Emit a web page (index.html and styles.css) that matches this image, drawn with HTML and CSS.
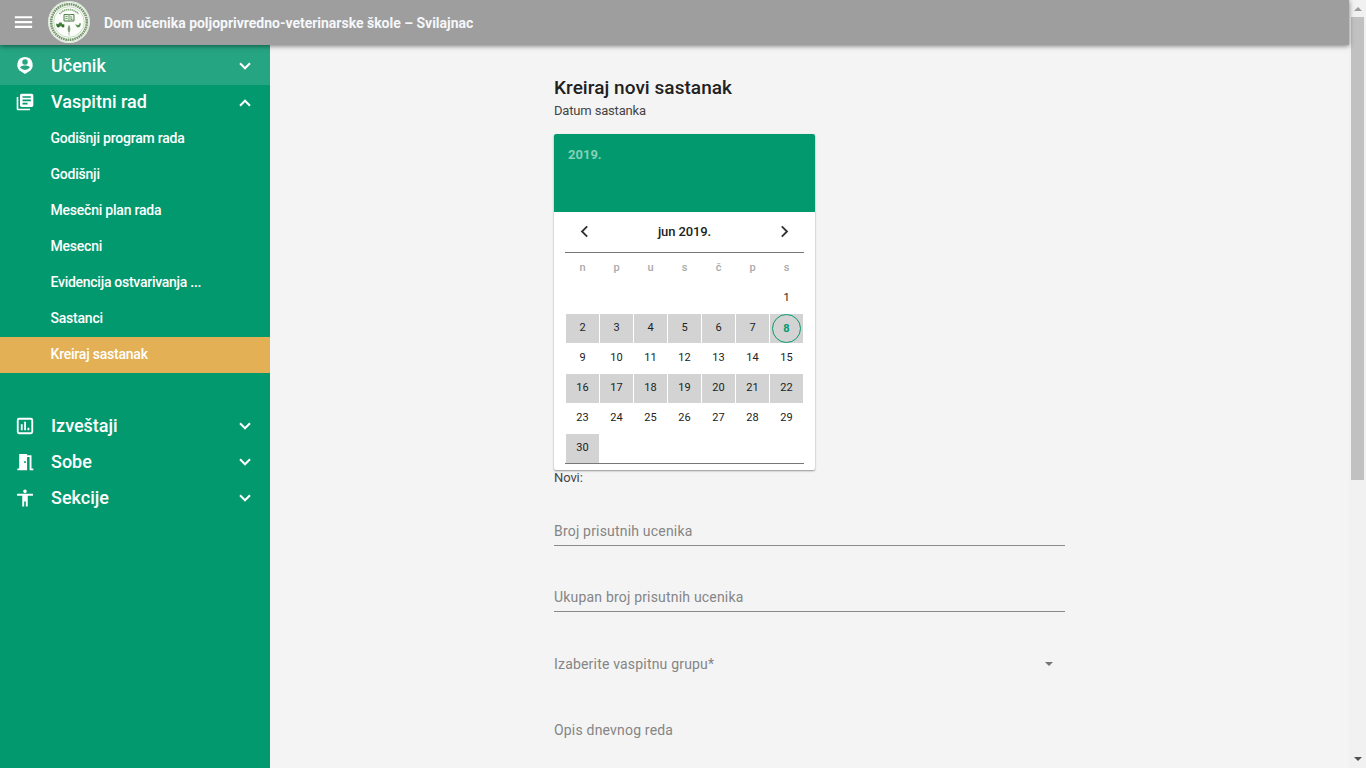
FILE: index.html
```html
<!DOCTYPE html>
<html lang="sr">
<head>
<meta charset="utf-8">
<title>Kreiraj novi sastanak</title>
<link rel="stylesheet" href="styles.css">
</head>
<body>
<div class="window">
  <div class="app">
    <header class="topbar">
      <svg class="burger" viewBox="0 0 24 24"><path d="M3 6h18v2.200H3zm0 5h18v2.200H3zm0 5h18v2.200H3z"/></svg>
      <svg class="logo" viewBox="0 0 44 44">
        <circle cx="22" cy="22" r="21" fill="#fcfdfb"/>
        <circle cx="22" cy="22" r="20.200" fill="none" stroke="#a9c4a2" stroke-width=".5"/>
        <circle cx="22" cy="22" r="17.800" fill="none" stroke="#78986e" stroke-width="2.600" stroke-dasharray="1.700 .6"/>
        <circle cx="22" cy="22" r="15.300" fill="none" stroke="#a3c49b" stroke-width=".6"/>
        <path d="M12.500 14a12.400 12.400 0 0 1 19 0" fill="none" stroke="#86a87e" stroke-width="1.800" stroke-dasharray="1.300 .6"/>
        <path d="M17 14.500h4.500l.5.6.5-.6H27v6.500h-4.500l-.5.6-.5-.6H17z" fill="#e6f0e3" stroke="#55804f" stroke-width="1"/>
        <path d="M22 15v6M18.500 16.500h2M18.500 18.500h2M24 16v3.500h1.500" fill="none" stroke="#5c8855" stroke-width=".8"/>
        <path d="M9 23.500l2 .8 1.500-1.800h2l.8 1.800h2v2H9.500z" fill="#3f7f39"/><circle cx="11.300" cy="26.200" r="1.300" fill="#346b2e"/><circle cx="16" cy="26.200" r="1.200" fill="#346b2e"/>
        <path d="M28.500 24.500l1.500.8 2-.3 1-2 .6 1-.8 2.700-2.500.6z" fill="#4f9149" stroke="#4f9149" stroke-width=".4"/>
        <path d="M22 25.500c1.300 2.500 1.200 4.500 0 6.500-1.200-2-1.300-4 0-6.500zm0 5.500v4.500" fill="#6f9668" stroke="#6f9668" stroke-width=".6"/>
      </svg>
      <div class="brand">Dom učenika poljoprivredno-veterinarske škole – Svilajnac</div>
    </header>
    <div class="body">
      <nav class="sidebar">
        <div class="group group-hover">
          <svg class="icon" viewBox="0 0 24 24"><path fill-rule="evenodd" d="M12 2.500a9.300 9.300 0 0 0-3.700 17.800L12 22.800l3.700-2.500A9.300 9.300 0 0 0 12 2.500zm0 2.500a3.300 3.300 0 1 1 0 6.600A3.300 3.300 0 0 1 12 5zm0 13a7 7 0 0 1-5.700-3c0-1.600 3.800-2.400 5.700-2.400s5.700.8 5.700 2.400a7 7 0 0 1-5.700 3z"/></svg>
          <span class="label">Učenik</span>
          <svg class="chev chev-low" viewBox="0 0 12 12"><path d="M1 3.300l5 5 5-5"/></svg>
        </div>
        <div class="group">
          <svg class="icon" viewBox="0 0 24 24"><path d="M4 6H2v14c0 1.100.9 2 2 2h14v-2H4V6zm16-4H8c-1.100 0-2 .9-2 2v12c0 1.100.9 2 2 2h12c1.100 0 2-.9 2-2V4c0-1.100-.9-2-2-2zm-1 9H9V9h10v2zm-4 4H9v-2h6v2zm4-8H9V5h10v2z"/></svg>
          <span class="label">Vaspitni rad</span>
          <svg class="chev chev-low" viewBox="0 0 12 12"><path d="M1 8.700l5-5 5 5"/></svg>
        </div>
        <div class="sub">Godišnji program rada</div>
        <div class="sub">Godišnji</div>
        <div class="sub">Mesečni plan rada</div>
        <div class="sub">Mesecni</div>
        <div class="sub sub-tight">Evidencija ostvarivanja ...</div>
        <div class="sub">Sastanci</div>
        <div class="sub sub-active">Kreiraj sastanak</div>
        <div class="group group-spaced">
          <svg class="icon" viewBox="0 0 24 24"><path fill-rule="evenodd" d="M5 2.200h14A2.800 2.800 0 0 1 21.800 5v14a2.800 2.800 0 0 1-2.800 2.800H5A2.800 2.800 0 0 1 2.200 19V5A2.800 2.800 0 0 1 5 2.200zm0 2.200a.6.600 0 0 0-.6.600v14c0 .3.300.6.600.6h14a.6.600 0 0 0 .6-.6V5a.6.600 0 0 0-.6-.6zM7 10h2.200v7H7zm4-3h2.200v10H11zm4 7h2.200v3H15z"/></svg>
          <span class="label">Izveštaji</span>
          <svg class="chev" viewBox="0 0 12 12"><path d="M1 3.300l5 5 5-5"/></svg>
        </div>
        <div class="group">
          <svg class="icon" viewBox="0 0 24 24"><path fill-rule="evenodd" d="M2.800 19.800H5V2.500h9.500v1.300h5.300v16H22V22h-4.500V6h-3v16H2.800zM11 11v2.200h2V11z"/></svg>
          <span class="label">Sobe</span>
          <svg class="chev" viewBox="0 0 12 12"><path d="M1 3.300l5 5 5-5"/></svg>
        </div>
        <div class="group">
          <svg class="icon" viewBox="0 0 24 24"><path d="M12 1.800a2.200 2.200 0 1 1 0 4.400 2.200 2.200 0 0 1 0-4.400zM21.500 9.300H15.300V22.200H13v-6h-2v6H8.700V9.300H2.500V7h19z"/></svg>
          <span class="label">Sekcije</span>
          <svg class="chev" viewBox="0 0 12 12"><path d="M1 3.300l5 5 5-5"/></svg>
        </div>
      </nav>
      <main class="content">
        <h1 class="title">Kreiraj novi sastanak</h1>
        <div class="caption">Datum sastanka</div>
        <section class="calendar">
          <div class="cal-head">2019.</div>
          <div class="cal-nav">
            <svg class="arrow" viewBox="0 0 12 12"><path d="M8.500 1.200L3.700 6l4.800 4.800"/></svg>
            <span>jun 2019.</span>
            <svg class="arrow" viewBox="0 0 12 12"><path d="M3.500 1.200L8.300 6l-4.800 4.800"/></svg>
          </div>
          <div class="cal-body">
            <div class="week names"><span>n</span><span>p</span><span>u</span><span>s</span><span>č</span><span>p</span><span>s</span></div>
            <div class="week"><span class="first">1</span></div>
            <div class="week shaded"><span>2</span><span>3</span><span>4</span><span>5</span><span>6</span><span>7</span><span><b class="today">8</b></span></div>
            <div class="week"><span>9</span><span>10</span><span>11</span><span>12</span><span>13</span><span>14</span><span>15</span></div>
            <div class="week shaded"><span>16</span><span>17</span><span>18</span><span>19</span><span>20</span><span>21</span><span>22</span></div>
            <div class="week"><span>23</span><span>24</span><span>25</span><span>26</span><span>27</span><span>28</span><span>29</span></div>
            <div class="week shaded"><span>30</span></div>
          </div>
        </section>
        <div class="novi">Novi:</div>
        <div class="field lined">Broj prisutnih ucenika</div>
        <div class="field lined">Ukupan broj prisutnih ucenika</div>
        <div class="field select"><span>Izaberite vaspitnu grupu*</span><i class="caret"></i></div>
        <div class="field">Opis dnevnog reda</div>
      </main>
    </div>
  </div>
  <aside class="scrollbar"><i class="up"></i><div class="thumb"></div><i class="down"></i></aside>
</div>
</body>
</html>
```
FILE: styles.css
```css
* { box-sizing: border-box; }
body { margin: 0; overflow: hidden; font-family: Roboto, "Liberation Sans", sans-serif; color: #222; background: #f4f4f4; }
svg { display: block; flex: none; }
.window { display: flex; height: 768px; }
.app { width: 1349px; display: flex; flex-direction: column; }
.topbar { position: relative; z-index: 1; height: 45px; flex: none; display: flex; align-items: center; padding-left: 12px; background: #9e9e9e; box-shadow: 0 1px 5px rgba(0,0,0,.5); }
.burger { width: 23px; height: 24px; margin-top: -1px; fill: #fff; }
.logo { width: 44px; height: 44px; margin: -2px 0 0 12px; }
.brand { margin-left: 13px; font-size: 14px; font-weight: 700; color: #f5f7fa; line-height: 20px; letter-spacing: -.015px; }
.body { flex: 1; min-height: 0; display: flex; }
.sidebar { width: 270px; background: #03996e; color: #fff; flex: none; }
.group { height: 36px; display: flex; align-items: center; padding: 0 19px 3px 15px; font-size: 18px; font-weight: 500; }
.group-hover { height: 40px; padding-bottom: 0; background: #26a582; }
.group-spaced { margin-top: 36px; }
.icon { width: 20px; height: 20px; margin-left: -.5px; fill: #fff; }
.label { flex: 1; margin-left: 16.500px; }
.chev { width: 12px; height: 12px; fill: none; stroke: #fff; stroke-width: 2; }
.chev-low { margin-top: 2px; }
.sub { height: 36px; line-height: 34px; padding-left: 50.500px; font-size: 14px; font-weight: 500; letter-spacing: -.22px; }
.sub-tight { letter-spacing: -.27px; }
.sub-active { background: #e3b056; }
.content { width: 511px; margin-left: 284px; }
.title { margin: 31px 0 0; font-size: 19px; font-weight: 500; line-height: 24px; letter-spacing: .05px; color: #212121; }
.caption { font-size: 13px; line-height: 20px; color: #444; margin-top: 1px; letter-spacing: -.17px; }
.calendar { width: 261px; height: 336px; margin-top: 13px; background: #fff; border-radius: 2px; box-shadow: 0 1px 2px rgba(0,0,0,.4); overflow: hidden; }
.cal-head { height: 78px; padding: 13px 14px; background: #03996e; color: #86d0b7; font-size: 13px; font-weight: 700; line-height: 15px; }
.cal-nav { height: 41px; margin: 0 11px; padding: 0 13px 2px; display: flex; justify-content: space-between; align-items: center; border-bottom: 1px solid #777; font-size: 13px; font-weight: 500; letter-spacing: -.1px; }
.arrow { width: 13px; height: 13px; fill: none; stroke: #333; stroke-width: 1.7; }
.cal-body { margin: 0 11px; height: 211px; border-bottom: 1px solid #777; }
.week { display: grid; grid-template-columns: repeat(7, 33px); column-gap: 1px; height: 29px; margin: 0 1px 1px; font-size: 11px; line-height: 27px; text-align: center; }
.names { color: #aaa; font-weight: 500; height: 30px; line-height: 29px; }
.first { grid-column: 7; }
.shaded span { background: #d3d3d3; }
.today { display: block; width: 29px; height: 29px; margin: 0 2px; border: 1px solid #03996e; border-radius: 50%; color: #03996e; line-height: 27px; font-weight: 700; }
.novi { font-size: 13px; line-height: 16px; color: #444; letter-spacing: -.1px; }
.field { height: 66px; padding-top: 35px; font-size: 14px; line-height: 20px; letter-spacing: .19px; color: #858585; }
.novi + .field { height: 60px; }
.lined { border-bottom: 1px solid #8a8a8a; }
.lined + .lined { padding-top: 41px; }
.select { display: flex; justify-content: space-between; align-items: flex-start; padding-top: 42px; }
.select + .field { padding-top: 42px; }
.caret { margin: 8px 12px 0 0; border: 4.500px solid transparent; border-top-color: #757575; border-bottom: 0; }
.scrollbar { width: 17px; background: #f1f1f1; display: flex; flex-direction: column; align-items: center; }
.up { margin: 7px 0 6px; border: 4px solid transparent; border-bottom-color: #9c9c9c; border-top: 0; }
.thumb { width: 13px; height: 463px; background: #c1c1c1; }
.down { margin: auto 0 7px; border: 4px solid transparent; border-top-color: #505050; border-bottom: 0; }
```
